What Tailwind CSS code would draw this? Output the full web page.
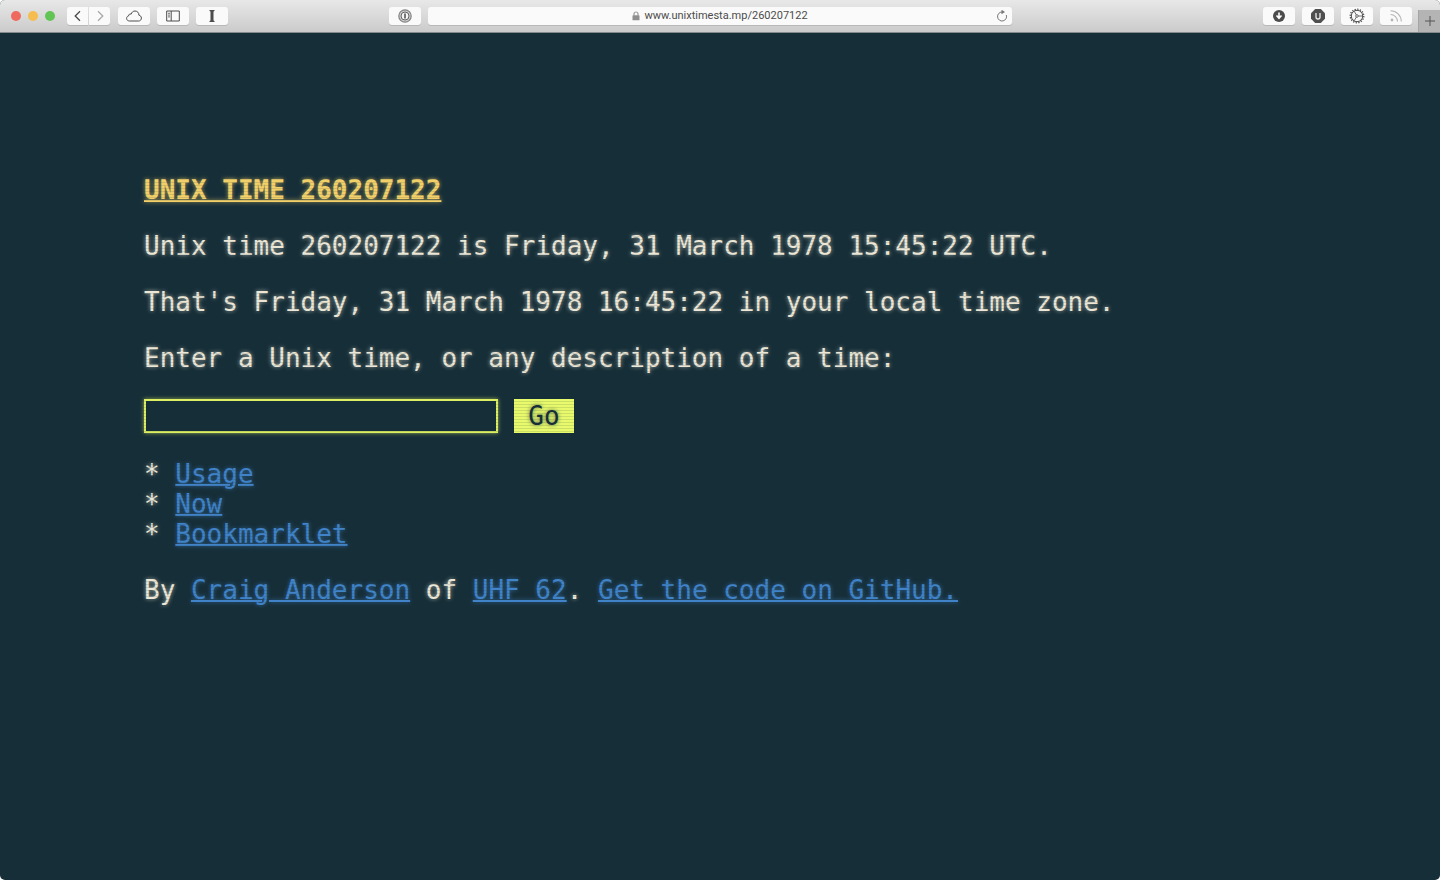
<!DOCTYPE html>
<html lang="en" class="h-full">
  <head>
    <meta charset="UTF-8" />
    <meta name="viewport" content="width=device-width, initial-scale=1.0" />
    <title>Unix time 260207122</title>
    <script src="https://cdn.jsdelivr.net/npm/@tailwindcss/browser@4"></script>
  </head>

  <body class="h-full bg-white">
    <div class="flex min-h-full flex-col overflow-hidden rounded-[5px] bg-[#162e38]">
      <!-- ============ BROWSER TOOLBAR ============ -->
      <header
        class="flex h-[33px] items-start justify-between border-b border-[#848b8e] bg-linear-to-b from-[#e8e8e8] to-[#cbcbcb] font-[Roboto,sans-serif] text-[#4c4c4c]"
      >
        <div class="flex flex-1 items-center pt-[7px]">
          <div class="ml-[11px] flex gap-[7px]">
            <span class="size-[10px] rounded-full bg-[#ee6a5f]"></span>
            <span class="size-[10px] rounded-full bg-[#f5bd4f]"></span>
            <span class="size-[10px] rounded-full bg-[#61c454]"></span>
          </div>
          <div class="ml-3 flex gap-px">
            <button aria-label="Back" class="flex h-[18px] w-[21px] items-center justify-center rounded-l-[3px] bg-[#fafafa] shadow-[0_1px_0_#b8b8b8]">
              <svg class="size-3" viewBox="0 0 12 12" fill="none" stroke="currentColor" stroke-width="1.3"><path d="M8 1.2 3.2 6 8 10.8" /></svg>
            </button>
            <button aria-label="Forward" class="flex h-[18px] w-[21px] items-center justify-center rounded-r-[3px] bg-[#fafafa] text-[#a8a8a8] shadow-[0_1px_0_#b8b8b8]">
              <svg class="size-3" viewBox="0 0 12 12" fill="none" stroke="currentColor" stroke-width="1.3"><path d="M4 1.2 8.8 6 4 10.8" /></svg>
            </button>
          </div>
          <div class="ml-2 flex gap-[7px]">
            <button aria-label="iCloud tabs" class="flex h-[18px] w-8 items-center justify-center rounded-[3px] bg-[#fafafa] shadow-[0_1px_0_#b8b8b8]">
              <svg class="h-3 w-4" viewBox="0 0 16 12" fill="none" stroke="currentColor"><path d="M3.6 11C1.7 11 .6 9.9.6 8.4.6 7 1.5 6.1 2.6 5.9 2.5 4.5 4 3.5 5.1 4.2 5.7 2.2 7.2 1 9 1c2.3 0 4 1.8 3.9 4.2 1.5.3 2.5 1.4 2.5 2.9 0 1.7-1.2 2.9-2.9 2.9Z" /></svg>
            </button>
            <button aria-label="Show sidebar" class="flex h-[18px] w-8 items-center justify-center rounded-[3px] bg-[#fafafa] shadow-[0_1px_0_#b8b8b8]">
              <svg class="h-3 w-[14px]" viewBox="0 0 14 12" fill="none" stroke="currentColor"><path d="M.7 1h12.6v10H.7ZM5.2 1v10" /><path d="M2 3.3h2M2 5.1h2M2 6.9h2" stroke-width=".8" /></svg>
            </button>
            <button aria-label="Save to Instapaper" class="flex h-[18px] w-8 items-center justify-center rounded-[3px] bg-[#fafafa] shadow-[0_1px_0_#b8b8b8]">
              <svg class="h-[14px] w-2" viewBox="0 0 8 14" fill="currentColor"><path d="M1.5 1h5v1l-1 .6v8.8l1 .6v1h-5v-1l1-.6V2.6l-1-.6Z" /></svg>
            </button>
          </div>
          <button aria-label="1Password" class="mr-[7px] ml-auto flex h-[18px] w-8 items-center justify-center rounded-[3px] bg-[#fafafa] shadow-[0_1px_0_#b8b8b8]">
            <svg class="size-[14px]" viewBox="0 0 14 14" fill="none" stroke="currentColor"><circle cx="7" cy="7" r="6.2" fill="#ccc" stroke="#858585" stroke-width="1.2" /><circle cx="7" cy="7" r="4" fill="#f4f4f4" stroke="#666" /><path d="M7 4.6v4.8" stroke-width="1.5" /></svg>
          </button>
        </div>

        <div class="mt-[7px] flex h-[18px] w-[584px] items-center rounded-[3px] bg-[#fafafa] px-1 shadow-[0_1px_0_#b8b8b8]">
          <span class="w-4"></span>
          <div class="flex flex-1 items-center justify-center gap-1">
            <svg class="h-[10px] w-2" viewBox="0 0 8 10"><path d="M2 4.5V3a2 2 0 0 1 4 0v1.5" fill="none" stroke="#999" stroke-width="1.2" /><rect x=".5" y="4.3" width="7" height="5" rx=".6" fill="#8e8e8e" /></svg>
            <span class="text-[11px]">www.unixtimesta.mp/260207122</span>
          </div>
          <button aria-label="Reload" class="flex w-4 justify-end">
            <svg class="size-3" viewBox="0 0 12 12" fill="none" stroke="#777"><path d="M10.3 5A4.5 4.5 0 1 1 6 2" /><path d="M5.5-.3 9 2 5.500 4.300Z" fill="#777" stroke="none" /></svg>
          </button>
        </div>

        <div class="flex flex-1 items-start justify-end">
          <div class="mr-[6px] flex gap-[7px] pt-[7px]">
            <button aria-label="Downloads" class="flex h-[18px] w-8 items-center justify-center rounded-[3px] bg-[#fafafa] shadow-[0_1px_0_#b8b8b8]">
              <svg class="size-3" viewBox="0 0 12 12"><circle cx="6" cy="6" r="6" fill="#4c4c4c" /><path d="M6 2.500v5M3.500 5.500 6 8.200l2.500-2.700" fill="none" stroke="#fff" stroke-width="1.6" /></svg>
            </button>
            <button aria-label="uBlock" class="flex h-[18px] w-8 items-center justify-center rounded-[3px] bg-[#fafafa] shadow-[0_1px_0_#b8b8b8]">
              <svg class="size-[14px]" viewBox="0 0 14 14"><path d="M4.200 0h5.600L14 4.200v5.600L9.800 14H4.200L0 9.800V4.200Z" fill="#4f4f4f" /><path d="M5 4v4.200c0 1.200.7 1.800 2 1.800s2-.6 2-1.800V4" fill="none" stroke="#eee" stroke-width="1.3" /></svg>
            </button>
            <button aria-label="Extension settings" class="flex h-[18px] w-8 items-center justify-center rounded-[3px] bg-[#fafafa] shadow-[0_1px_0_#b8b8b8]">
              <svg class="size-4" viewBox="0 0 16 16" fill="none" stroke="currentColor"><circle cx="8" cy="8" r="6.800" stroke-width="1.3" stroke-dasharray="1.300 1.370" /><circle cx="8" cy="8" r="5.700" /><circle cx="8" cy="8" r="1.300" stroke-width=".8" /><path d="M9.300 8h4.300M7.300 6.900 5.200 3.200M7.300 9.100l-2.100 3.700" stroke-width=".8" /></svg>
            </button>
            <button aria-label="RSS" class="flex h-[18px] w-8 items-center justify-center rounded-[3px] bg-[#fafafa] text-[#b5b5b5] shadow-[0_1px_0_#b8b8b8]">
              <svg class="size-3" viewBox="0 0 12 12" fill="none" stroke="currentColor" stroke-width="1.1"><path d="M.5 4.500a7 7 0 0 1 7 7M.5.700a10.800 10.800 0 0 1 10.800 10.800" /><circle cx="2" cy="10" r="1.400" fill="currentColor" stroke="none" /></svg>
            </button>
          </div>
          <button aria-label="New tab" class="mt-[10px] flex h-[22px] w-[22px] items-center justify-center border-l border-[#a5a5a5] bg-[#b4b4b4]">
            <svg class="size-[10px]" viewBox="0 0 10 10" stroke="#555"><path d="M5 0v10M0 5h10" /></svg>
          </button>
        </div>
      </header>

      <!-- ============ PAGE ============ -->
      <main
        class="relative flex flex-1 flex-col gap-[26px] px-[10%] pt-[142px] font-['DejaVu_Sans_Mono',monospace] text-[26px] leading-[30px] text-[#ebe6d6] text-shadow-[0_0_4px_#ebe6d6b0]"
      >
        <h1 class="font-bold text-[#f2d069] underline decoration-2 text-shadow-[0_0_4px_#f2d069b0]">UNIX TIME 260207122</h1>
        <p>Unix time 260207122 is Friday, 31 March 1978 15:45:22 UTC.</p>
        <p>That's Friday, 31 March 1978 16:45:22 in your local time zone.</p>
        <p><label for="time">Enter a Unix time, or any description of a time:</label></p>

        <form class="flex gap-4" onsubmit="return false">
          <input id="time" type="text" class="h-[34px] w-[354px] border-2 border-[#dcee62] px-2 shadow-[0_0_4px_#dcee62b0] outline-none" />
          <button class="h-[34px] w-[60px] bg-[#e8fa6c] text-[#162e38] text-shadow-[0_0_4px_#162e38b0]">Go</button>
        </form>

        <ul>
          <li>* <a href="#usage" class="text-[#4083c9] underline decoration-2 text-shadow-[0_0_4px_#4083c9b0]">Usage</a></li>
          <li>* <a href="#now" class="text-[#4083c9] underline decoration-2 text-shadow-[0_0_4px_#4083c9b0]">Now</a></li>
          <li>* <a href="#bookmarklet" class="text-[#4083c9] underline decoration-2 text-shadow-[0_0_4px_#4083c9b0]">Bookmarklet</a></li>
        </ul>

        <p>
          By
          <a href="#craig" class="text-[#4083c9] underline decoration-2 text-shadow-[0_0_4px_#4083c9b0]">Craig Anderson</a>
          of
          <a href="#uhf62" class="text-[#4083c9] underline decoration-2 text-shadow-[0_0_4px_#4083c9b0]">UHF 62</a>.
          <a href="#github" class="text-[#4083c9] underline decoration-2 text-shadow-[0_0_4px_#4083c9b0]">Get the code on GitHub.</a>
        </p>

        <!-- scanlines -->
        <div class="pointer-events-none absolute inset-0 bg-[repeating-linear-gradient(to_bottom,transparent_0px,transparent_2px,#162e3822_2px,#162e3822_3px)]"></div>
      </main>
    </div>
  </body>
</html>
